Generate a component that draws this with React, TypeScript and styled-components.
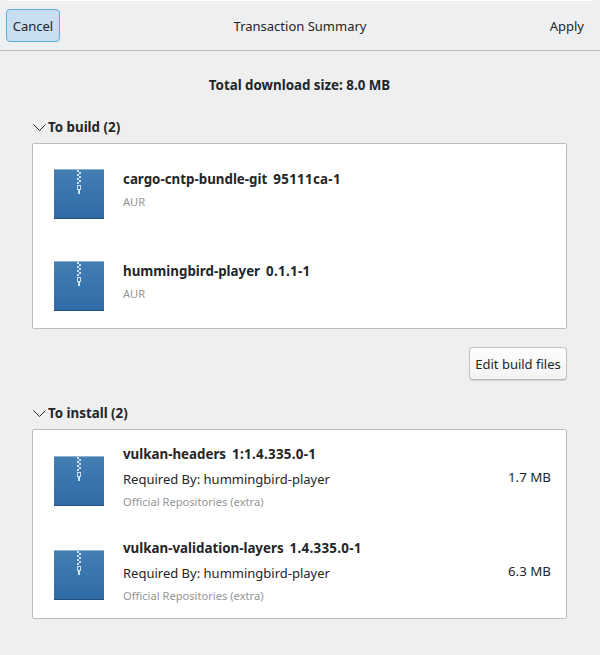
import React from "react";
import styled, { createGlobalStyle } from "styled-components";

const GlobalStyle = createGlobalStyle`
  html, body {
    margin: 0;
    padding: 0;
    background: #efefef;
  }
  body {
    font-family: "Noto Sans", sans-serif;
    color: #232629;
  }
`;

const Window = styled.div`
  width: 600px;
  height: 655px;
  overflow: hidden;
  background: #efefef;
`;

const HeaderBar = styled.header`
  height: 51px;
  box-sizing: border-box;
  padding: 9px 6px 8px;
  display: grid;
  grid-template-columns: 1fr auto 1fr;
  align-items: center;
  background: linear-gradient(#ffffff, #ffffff) 7px 0 / 585px 1px no-repeat, #eeeff0;
  border-bottom: 1px solid #bdbfbe;
`;

const CancelButton = styled.div`
  justify-self: start;
  height: 33px;
  width: 54px;
  box-sizing: border-box;
  display: flex;
  align-items: center;
  justify-content: center;
  background: #c9def0;
  border: 1px solid #5dade2;
  border-radius: 4px;
  font-size: 13px;
`;

const HeaderTitle = styled.div`
  font-size: 13px;
`;

const ApplyLabel = styled.div`
  justify-self: end;
  font-size: 13px;
  padding-right: 10px;
`;

const Body = styled.main`
  padding: 24px 33px 0 32px;
  display: flex;
  flex-direction: column;
`;

const DownloadSize = styled.div`
  text-align: center;
  font-size: 13.33px;
  font-weight: 700;
  line-height: 20px;
  margin-bottom: 22px;
`;

const SectionHeader = styled.div`
  display: flex;
  align-items: center;
  gap: 1px;
  height: 20px;
  font-size: 13.33px;
  font-weight: 700;
  margin-bottom: 6px;
`;

const Chevron = styled.svg`
  width: 15px;
  height: 15px;
  flex: none;
`;

const Card = styled.section`
  background: #ffffff;
  border: 1px solid #bcbcbc;
  border-radius: 2px;
  box-sizing: border-box;
`;

const Row = styled.div<{ $height: number }>`
  height: ${({ $height }) => $height}px;
  box-sizing: border-box;
  display: flex;
  align-items: flex-start;
  padding: 0 15px 0 21px;
`;

const PackageIcon = styled.svg<{ $top: number }>`
  width: 50px;
  height: 50px;
  flex: none;
  margin: ${({ $top }) => $top}px 19px 0 0;
`;

const Info = styled.div<{ $top: number }>`
  flex: 1;
  display: flex;
  flex-direction: column;
  margin-top: ${({ $top }) => $top}px;
`;

const NameLine = styled.div`
  font-size: 13.33px;
  font-weight: 700;
  line-height: 18px;
  white-space: pre;
`;

const Version = styled.span`
  margin-left: 6px;
  letter-spacing: 0.3px;
`;

const Required = styled.div`
  font-size: 13px;
  line-height: 18px;
  margin-top: 7px;
`;

const Source = styled.div`
  font-size: 11.15px;
  line-height: 14px;
  color: #949596;
  margin-top: 7px;
`;

const Size = styled.div`
  font-size: 13.33px;
  flex: none;
  align-self: center;
`;

const ActionRow = styled.div`
  display: flex;
  justify-content: flex-end;
  margin: 18px 0 23px;
`;

const EditButton = styled.div`
  height: 33px;
  width: 98px;
  box-sizing: border-box;
  display: flex;
  align-items: center;
  justify-content: center;
  font-size: 13px;
  background: linear-gradient(#fdfdfd, #f3f3f3);
  border: 1px solid #c4c4c4;
  border-bottom-color: #b4b4b4;
  border-radius: 4px;
  box-shadow: 0 1px 1px rgba(0, 0, 0, 0.12);
`;

const ZipIcon: React.FC<{ top: number }> = ({ top }) => (
  <PackageIcon $top={top} viewBox="0 0 50 50">
    <defs>
      <linearGradient id="zipBody" x1="0" y1="0" x2="0" y2="1">
        <stop offset="0" stopColor="#437fb4" />
        <stop offset="1" stopColor="#2f6ba6" />
      </linearGradient>
    </defs>
    <rect width="50" height="50" fill="url(#zipBody)" />
    <rect width="50" height="1" fill="#8db3cf" />
    <rect y="49" width="50" height="1" fill="#24507e" />
    {[1, 3, 5, 7, 9, 11, 13].map((y, i) => (
      <rect key={y} x={i % 2 ? 25 : 23} y={y} width="2" height="2" fill="#cfe0ee" />
    ))}
    <rect x="23.5" y="16.5" width="3" height="4" fill="none" stroke="#cfe0ee" />
    <rect x="24" y="21" width="2" height="4" fill="#cfe0ee" />
  </PackageIcon>
);

const SectionTitle: React.FC<{ label: string }> = ({ label }) => (
  <SectionHeader>
    <Chevron viewBox="0 0 15 15">
      <path d="M1.5 4.5 L7.5 10.5 L13.5 4.5" fill="none" stroke="#232629" strokeWidth="1" />
    </Chevron>
    {label}
  </SectionHeader>
);

interface PackageItem {
  name: string;
  version: string;
  required?: string;
  source: string;
  size?: string;
}

const buildItems: PackageItem[] = [
  { name: "cargo-cntp-bundle-git", version: "95111ca-1", source: "AUR" },
  { name: "hummingbird-player", version: "0.1.1-1", source: "AUR" },
];

const installItems: PackageItem[] = [
  {
    name: "vulkan-headers",
    version: "1:1.4.335.0-1",
    required: "Required By: hummingbird-player",
    source: "Official Repositories (extra)",
    size: "1.7 MB",
  },
  {
    name: "vulkan-validation-layers",
    version: "1.4.335.0-1",
    required: "Required By: hummingbird-player",
    source: "Official Repositories (extra)",
    size: "6.3 MB",
  },
];

const PackageRow: React.FC<{ item: PackageItem }> = ({ item }) => (
  <Row $height={item.required ? 94 : 92}>
    <ZipIcon top={item.required ? 26 : 25} />
    <Info $top={item.required ? 15 : 26}>
      <NameLine>
        {item.name}
        <Version>{item.version}</Version>
      </NameLine>
      {item.required && <Required>{item.required}</Required>}
      <Source>{item.source}</Source>
    </Info>
    {item.size && <Size>{item.size}</Size>}
  </Row>
);

const App: React.FC = () => (
  <Window>
    <GlobalStyle />
    <HeaderBar>
      <CancelButton>Cancel</CancelButton>
      <HeaderTitle>Transaction Summary</HeaderTitle>
      <ApplyLabel>Apply</ApplyLabel>
    </HeaderBar>
    <Body>
      <DownloadSize>Total download size: 8.0 MB</DownloadSize>
      <SectionTitle label="To build (2)" />
      <Card>
        {buildItems.map((item) => (
          <PackageRow key={item.name} item={item} />
        ))}
      </Card>
      <ActionRow>
        <EditButton>Edit build files</EditButton>
      </ActionRow>
      <SectionTitle label="To install (2)" />
      <Card>
        {installItems.map((item) => (
          <PackageRow key={item.name} item={item} />
        ))}
      </Card>
    </Body>
  </Window>
);

export default App;
